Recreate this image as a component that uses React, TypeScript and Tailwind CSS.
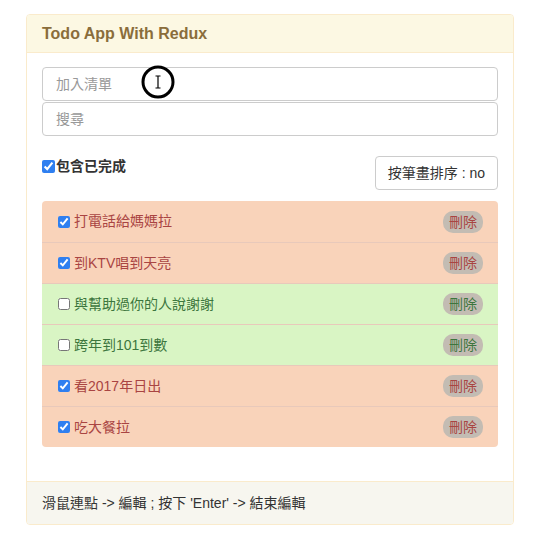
import { useState } from "react";

interface Todo {
  id: number;
  text: string;
  done: boolean;
}

const initialTodos: Todo[] = [
  { id: 1, text: "打電話給媽媽拉", done: true },
  { id: 2, text: "到KTV唱到天亮", done: true },
  { id: 3, text: "與幫助過你的人說謝謝", done: false },
  { id: 4, text: "跨年到101到數", done: false },
  { id: 5, text: "看2017年日出", done: true },
  { id: 6, text: "吃大餐拉", done: true },
];

function CursorRing() {
  // the recording's click highlight over the input
  return (
    <svg className="absolute left-[141px] top-[65px] pointer-events-none" width="34" height="34" viewBox="0 0 34 34">
      <circle cx="17" cy="17" r="15" fill="none" stroke="#000" strokeWidth="3" />
      <path d="M14.5 11h5M14.5 23h5M17 11v12" stroke="#000" strokeWidth="1.2" fill="none" />
    </svg>
  );
}

export default function App() {
  const [todos, setTodos] = useState<Todo[]>(initialTodos);
  const [showDone, setShowDone] = useState(true);

  const toggle = (id: number) =>
    setTodos(todos.map((t) => (t.id === id ? { ...t, done: !t.done } : t)));

  return (
    <div className="relative w-[542px] h-[546px] bg-white pt-[14px] pl-[26px] font-['Liberation_Sans','Noto_Sans_CJK_TC',sans-serif] text-[14px] text-[#333]">
      <div className="w-[488px] h-[511px] border border-[#faebcc] rounded-[4px] flex flex-col bg-white">
        {/* header */}
        <div className="h-[38px] bg-[#fcf8e3] border-b border-[#faebcc] px-[15px] flex items-center text-[#8a6d3b] text-[16px] font-bold rounded-t-[3px]">
          Todo App With Redux
        </div>

        {/* body */}
        <div className="flex-1 px-[15px] pt-[14px]">
          <input
            placeholder="加入清單"
            className="w-full h-[34px] border border-[#ccc] rounded-[4px] px-[13px] text-[14px] placeholder-[#999] outline-none"
          />
          <input
            placeholder="搜尋"
            className="mt-px w-full h-[34px] border border-[#ccc] rounded-[4px] px-[13px] text-[14px] placeholder-[#999] outline-none"
          />

          <div className="mt-[20px] flex justify-between items-start">
            <label className="flex items-center h-[20px] font-bold text-[14px] text-[#333]">
              <input
                type="checkbox"
                checked={showDone}
                onChange={() => setShowDone(!showDone)}
                className="w-[13px] h-[13px] m-0 mr-[1px] accent-[#2f7ff0]"
              />
              包含已完成
            </label>
            <button className="h-[34px] px-[12px] border border-[#ccc] rounded-[4px] bg-white text-[14px] text-[#333]">
              按筆畫排序 : no
            </button>
          </div>

          <ul className="mt-[11px] rounded-[4px] overflow-hidden">
            {todos.map((t, i) => (
              <li
                key={t.id}
                className={
                  "h-[41px] flex items-center pl-[16px] pr-[15px] " +
                  (t.done ? "bg-[#f9d3ba] text-[#a94442]" : "bg-[#d9f5c4] text-[#3c763d]") +
                  (i > 0 ? " border-t border-[#e8c9bb]" : "")
                }
              >
                <input
                  type="checkbox"
                  checked={t.done}
                  onChange={() => toggle(t.id)}
                  className="w-[12px] h-[12px] m-0 mr-[4px] accent-[#2f7ff0]"
                />
                <span className="flex-1">{t.text}</span>
                <button className="w-[40px] h-[22px] rounded-[10px] bg-[#c3bcb3] text-[14px] leading-none">
                  刪除
                </button>
              </li>
            ))}
          </ul>
        </div>

        {/* footer */}
        <div className="h-[43px] bg-[#f7f6ef] border-t border-[#faebcc] px-[15px] flex items-center text-[14px] text-[#333] rounded-b-[3px]">
          滑鼠連點 -&gt; 編輯 ; 按下 'Enter' -&gt; 結束編輯
        </div>
      </div>
      <CursorRing />
    </div>
  );
}
